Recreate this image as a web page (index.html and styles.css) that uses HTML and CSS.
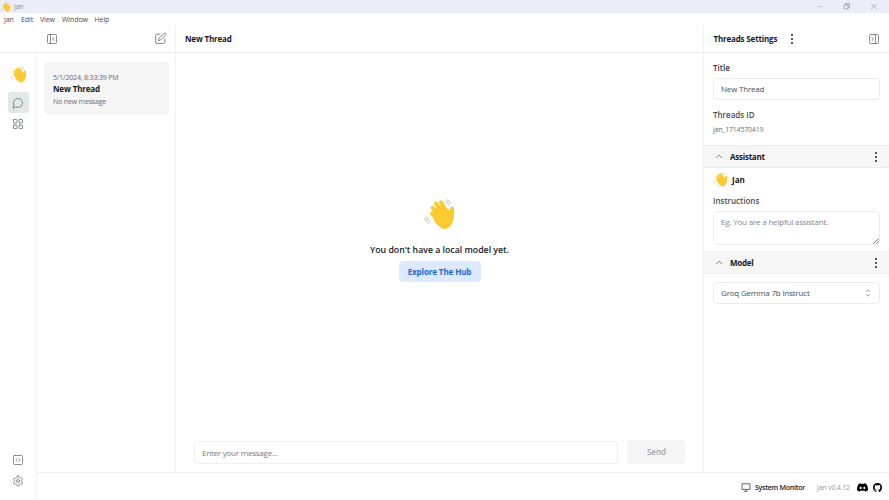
FILE: index.html
```html
<!DOCTYPE html>
<html lang="en">
<head>
<meta charset="utf-8">
<title>Jan</title>
<link rel="stylesheet" href="styles.css">
</head>
<body>
<svg class="defs" aria-hidden="true">
  <symbol id="wave" viewBox="27 24 96 96">
    <g fill="none" stroke="#fbc931" stroke-linecap="round" stroke-width="12">
      <path d="M51 71 78 100M53 53 86 92M63 41 94 84M78 37 103 80" />
      <path d="M112 55Q106 68 108 88" stroke-width="11" />
    </g>
    <path d="M55 70 64 54 82 42 100 60 117.500 58Q119 83 112 99 103 117 86 117 74 115 58 94Z" fill="#fbc931" />
    <path d="M57 59 68 72M68 47 78 60" fill="none" stroke="#edb62b" stroke-width="1.2" />
    <path d="M90 34Q99 36 102 46M95 29Q105 32 108 41M35 81Q38 91 46 94M30 85Q33 96 41 100" fill="none" stroke="#b1b9be" stroke-width="2.5" stroke-linecap="round" />
  </symbol>
  <symbol id="dots" viewBox="0 0 4 12"><circle cx="2" cy="2" r="1"/><circle cx="2" cy="6" r="1"/><circle cx="2" cy="10" r="1"/></symbol>
</svg>
<div class="titlebar">
  <svg class="app-icon"><use href="#wave"/></svg><span class="app-name">Jan</span>
  <svg class="window-controls" viewBox="0 0 62 13"><path class="faint" d="M1 6.500h6"/><path d="M28 4.900h4v4h-4zM29.200 4.900V3.500h4.200v4.200H32M55.300 3.800l5.400 5.400M60.700 3.800l-5.400 5.400"/></svg>
</div>
<nav class="menubar"><span class="m-jan">Jan</span><span class="m-edit">Edit</span><span class="m-view">View</span><span class="m-window">Window</span><span>Help</span></nav>
<header class="topbar">
  <div class="top-left">
    <svg class="icon i12" viewBox="0 0 24 24"><rect x="3" y="3" width="18" height="18" rx="2"/><path d="M9 3v18m7-6-3-3 3-3"/></svg>
    <svg class="icon i13" viewBox="0 0 24 24"><path d="M11 4H5a2 2 0 0 0-2 2v13a2 2 0 0 0 2 2h13a2 2 0 0 0 2-2v-6M18.400 2.600a2.100 2.100 0 0 1 3 3L12 15l-4 1 1-4z"/></svg>
  </div>
  <div class="top-center"><span class="t-thread">New Thread</span></div>
  <div class="top-right"><span class="t-settings">Threads Settings</span><svg class="dots"><use href="#dots"/></svg>
    <svg class="icon i12 push" viewBox="0 0 24 24"><rect x="3" y="3" width="18" height="18" rx="2"/><path d="M15 3v18M8 9l3 3-3 3"/></svg></div>
</header>
<div class="body">
  <aside class="rail">
    <svg class="rail-wave"><use href="#wave"/></svg>
    <div class="rail-item active"><svg class="icon i12" viewBox="0 0 24 24"><path d="M7.900 20A9 9 0 1 0 4 16.100L2 22Z"/></svg></div>
    <div class="rail-item"><svg class="icon i12" viewBox="0 0 24 24"><rect x="3" y="3" width="7" height="7" rx="1"/><rect x="14" y="3" width="7" height="7" rx="1"/><rect x="14" y="14" width="7" height="7" rx="1"/><rect x="3" y="14" width="7" height="7" rx="1"/></svg></div>
    <div class="rail-item bottom"><svg class="icon i12" viewBox="0 0 24 24"><rect x="3" y="3" width="18" height="18" rx="2"/><path d="m10 9.500-2.500 2.500 2.500 2.500M14 9.500l2.500 2.500-2.500 2.500"/></svg></div>
    <div class="rail-item"><svg class="icon i12" viewBox="0 0 24 24"><path d="M12.220 2h-.44a2 2 0 0 0-2 2v.18a2 2 0 0 1-1 1.730l-.43.25a2 2 0 0 1-2 0l-.15-.08a2 2 0 0 0-2.730.73l-.22.38a2 2 0 0 0 .73 2.730l.15.1a2 2 0 0 1 1 1.720v.51a2 2 0 0 1-1 1.740l-.15.09a2 2 0 0 0-.73 2.730l.22.38a2 2 0 0 0 2.730.73l.15-.08a2 2 0 0 1 2 0l.43.25a2 2 0 0 1 1 1.730V20a2 2 0 0 0 2 2h.44a2 2 0 0 0 2-2v-.18a2 2 0 0 1 1-1.730l.43-.25a2 2 0 0 1 2 0l.15.08a2 2 0 0 0 2.730-.73l.22-.39a2 2 0 0 0-.73-2.730l-.15-.08a2 2 0 0 1-1-1.740v-.5a2 2 0 0 1 1-1.740l.15-.09a2 2 0 0 0 .73-2.730l-.22-.38a2 2 0 0 0-2.730-.73l-.15.08a2 2 0 0 1-2 0l-.43-.25a2 2 0 0 1-1-1.730V4a2 2 0 0 0-2-2z"/><circle cx="12" cy="12" r="3"/></svg></div>
  </aside>
  <div class="workspace">
    <div class="panels">
      <section class="threads">
        <article class="thread-card"><span class="date">5/1/2024, 8:33:39 PM</span><strong class="card-title">New Thread</strong><span class="card-note">No new message</span></article>
      </section>
      <main class="chat">
        <div class="empty"><svg class="big-wave"><use href="#wave"/></svg><p class="no-model">You don't have a local model yet.</p><button class="hub"><span>Explore The Hub</span></button></div>
        <div class="composer"><div class="message"><span>Enter your message...</span></div><button class="send"><span>Send</span></button></div>
      </main>
      <aside class="settings">
        <div class="details">
          <div class="label l-title"><span>Title</span></div>
          <div class="field"><span class="v-title">New Thread</span></div>
          <div class="label l-id"><span>Threads ID</span></div>
          <div class="id"><span>jan_1714570419</span></div>
        </div>
        <div class="section-head"><svg class="chev" viewBox="0 0 8 5"><path d="m1 4 3-3 3 3"/></svg><span class="h-assistant">Assistant</span><svg class="dots push"><use href="#dots"/></svg></div>
        <div class="assistant">
          <div class="agent"><svg class="agent-wave"><use href="#wave"/></svg><span>Jan</span></div>
          <div class="label l-inst"><span>Instructions</span></div>
          <div class="area"><span>Eg. You are a helpful assistant.</span><svg class="grip" viewBox="0 0 6 6"><path d="M.5 5.500l5-5M3.500 5.500l2-2"/></svg></div>
        </div>
        <div class="section-head"><svg class="chev" viewBox="0 0 8 5"><path d="m1 4 3-3 3 3"/></svg><span class="h-model">Model</span><svg class="dots push"><use href="#dots"/></svg></div>
        <div class="field select"><span class="v-model">Groq Gemma 7b Instruct</span><svg class="updown" viewBox="0 0 6 8"><path d="m1 2.800 2-2 2 2M1 5.200l2 2 2-2"/></svg></div>
      </aside>
    </div>
    <footer class="status">
      <svg class="monitor" viewBox="0 0 10 9"><path d="M1 .8h8v5.600H1zM5 6.400v1.800M3.200 8.300h3.600"/></svg><span class="sysmon">System Monitor</span><span class="version">Jan v0.4.12</span>
      <svg class="discord" viewBox="0 0 24 24"><path d="M20.300 4.400A19.800 19.800 0 0 0 15.400 2.900l-.6 1.300a18 18 0 0 0-5.600 0l-.6-1.300A20 20 0 0 0 3.700 4.400C.5 9.100-.3 13.700.1 18.200a20 20 0 0 0 6 3l1.300-2-2-1 .5-.4c4 1.800 8.200 1.800 12.200 0l.5.4-2 1 1.300 2a20 20 0 0 0 6-3c.5-5.200-.8-9.700-3.600-13.800zM8 15.300c-1.200 0-2.200-1.100-2.200-2.400s1-2.400 2.200-2.400 2.200 1.100 2.200 2.400S9.200 15.300 8 15.300zm8 0c-1.200 0-2.200-1.100-2.200-2.400s1-2.400 2.200-2.400 2.200 1.100 2.200 2.400-1 2.400-2.200 2.400z"/></svg>
      <svg class="github" viewBox="0 0 24 24"><path d="M12 .3a12 12 0 0 0-3.800 23.380c.6.120.83-.26.83-.57v-2.230c-3.340.73-4.030-1.420-4.030-1.420-.55-1.390-1.330-1.760-1.330-1.760-1.090-.74.080-.73.080-.73 1.200.09 1.840 1.240 1.840 1.240 1.070 1.830 2.810 1.300 3.490 1 .11-.78.42-1.310.76-1.610-2.660-.3-5.460-1.330-5.460-5.930 0-1.310.46-2.380 1.230-3.220-.12-.3-.53-1.520.12-3.180 0 0 1.010-.32 3.300 1.230a11.500 11.500 0 0 1 6 0c2.290-1.550 3.300-1.230 3.300-1.230.65 1.660.24 2.880.12 3.180.77.840 1.230 1.910 1.230 3.220 0 4.610-2.800 5.620-5.480 5.920.43.370.81 1.100.81 2.220v3.290c0 .32.220.69.830.57A12 12 0 0 0 12 .3"/></svg>
    </footer>
  </div>
</div>
</body>
</html>
```

FILE: styles.css
```css
* { box-sizing: border-box; }
body { margin: 0; width: 889px; height: 500px; display: flex; flex-direction: column; overflow: hidden; background: #fff; color: #17191c; font: 8px/12px "Open Sans", "Noto Sans", sans-serif; }
svg { display: block; flex: none; }
span, strong, p { white-space: nowrap; }
button { border: 0; padding: 0; font: inherit; }
.defs { position: absolute; width: 0; height: 0; }
.icon { fill: none; stroke: #6c7075; stroke-width: 1.6; stroke-linecap: round; stroke-linejoin: round; }
.i12 { width: 12px; height: 12px; }
.i13 { width: 13px; height: 13px; }
.push { margin-left: auto; }
.dots { width: 4px; height: 12px; fill: #222; }

.titlebar { height: 13px; flex: none; display: flex; align-items: center; background: #ebeef8; padding-left: 1px; }
.app-icon { width: 10px; height: 10px; }
.app-name { margin-left: 3px; color: #8b8d94; font-size: 7px; line-height: 14px; letter-spacing: -.25px; }
.window-controls { width: 62px; height: 13px; margin-left: auto; margin-right: 11px; fill: none; stroke: #999da3; stroke-width: .8; }
.window-controls .faint { stroke: #c9ccd3; }
.menubar { height: 12px; flex: none; display: flex; padding-left: 4px; font-size: 7px; line-height: 13px; color: #4b4d50; letter-spacing: -.1px; }
.m-jan { width: 17px; } .m-edit { width: 19px; } .m-view { width: 22px; } .m-window { width: 32.5px; }

.topbar { height: 28px; flex: none; display: flex; border-bottom: 1px solid #e9ebf5; font-weight: 700; line-height: 27px; letter-spacing: -.17px; }
.top-left { width: 176px; display: flex; align-items: center; justify-content: space-between; padding: 0 8px 0 46px; border-right: 1px solid #f1f2f6; }
.top-center { width: 528px; padding-left: 9px; border-right: 1px solid #f1f2f6; }
.top-right { flex: 1; display: flex; align-items: center; padding: 0 9px 0 9.5px; }
.top-right .dots:not(.push) { margin-left: 13px; }

.body { flex: 1; min-height: 0; display: flex; }
.rail { width: 37px; display: flex; flex-direction: column; align-items: flex-start; border-right: 1px solid #f1f2f5; padding: 13px 0 9px 8px; }
.rail-wave { width: 17px; height: 17px; margin: 0 0 9px 2px; }
.rail-item { width: 21px; height: 21px; flex: none; display: flex; align-items: center; padding-left: 4px; border-radius: 3px; }
.rail-item.active { background: #e0e9e8; }
.rail-item.bottom { margin-top: auto; }
.workspace { flex: 1; display: flex; flex-direction: column; min-width: 0; }
.panels { flex: 1; display: flex; min-height: 0; }
.threads { width: 139px; padding: 9px 6px 9px 7px; border-right: 1px solid #f1f2f6; }
.thread-card { height: 53px; display: flex; flex-direction: column; align-items: flex-start; border-radius: 4px; background: #f5f5f6; padding: 9px; }
.date, .card-note { font-size: 7px; color: #686b6f; letter-spacing: -.17px; }
.date { line-height: 13px; height: 12px; }
.card-title { letter-spacing: -.13px; }
.card-note { line-height: 13px; }

.chat { width: 528px; display: flex; flex-direction: column; border-right: 1px solid #f0f1f4; }
.empty { flex: 1; display: flex; flex-direction: column; align-items: center; padding-top: 145px; }
.big-wave { width: 32px; height: 32px; }
.no-model { margin: 14px 0 4px; font-size: 8.75px; line-height: 13px; font-weight: 600; }
.hub { width: 82px; height: 21px; border-radius: 4px; background: #dbeafe; color: #2563d9; font-weight: 700; line-height: 21px; letter-spacing: -.1px; }
.composer { display: flex; gap: 9px; padding: 0 17px 8px 18px; align-items: center; }
.message { width: 424px; height: 23px; border: 1px solid #eeeff4; border-radius: 4px; padding-left: 7px; line-height: 22px; color: #777b80; margin-top: 1px; letter-spacing: -.22px; }
.send { width: 59px; height: 24px; border-radius: 4px; background: #f5f5f6; color: #a0a2a6; font-weight: 600; line-height: 24px; }

.settings { flex: 1; }
.details { height: 92px; padding: 9px 9px 0; }
.label { font-weight: 600; color: #4b4e54; line-height: 12px; }
.field { height: 22px; border: 1px solid #e9ebf4; border-radius: 4px; padding: 0 7px; line-height: 20px; color: #4a4d52; letter-spacing: -.19px; }
.l-title { height: 16px; line-height: 12px; color: #303238; }
.l-id { margin-top: 9px; }
.id { font-size: 7px; line-height: 17px; color: #6c6f74; letter-spacing: -.2px; }
.section-head { height: 23px; display: flex; align-items: center; background: #f6f6f7; border-top: 1px solid #edf0f8; border-bottom: 1px solid #e8ebf8; font-weight: 700; line-height: 21px; padding: 0 11px; letter-spacing: -.25px; }
.section-head .chev { margin-right: 7px; }
.chev { width: 8px; height: 5px; fill: none; stroke: #777b80; stroke-width: .8; }
.assistant { height: 83px; padding: 3px 9px 0; }
.agent { height: 17px; display: flex; align-items: center; gap: 4px; font-weight: 700; }
.agent-wave { width: 15px; height: 15px; margin-bottom: 1px; }
.l-inst { margin-top: 7px; height: 16px; }
.area { height: 34px; position: relative; border: 1px solid #e9ebf4; border-radius: 4px; padding: 4px 7px; color: #83868b; letter-spacing: -.19px; }
.grip { position: absolute; right: 0; bottom: 0; width: 6px; height: 6px; stroke: #555; stroke-width: .8; }
.select { margin: 8px 9px 0; display: flex; align-items: center; justify-content: space-between; padding-right: 8px; }
.updown { width: 6px; height: 8px; fill: none; stroke: #777b80; stroke-width: .8; }

.status { height: 28px; border-top: 1px solid #f0f1f3; display: flex; align-items: center; justify-content: flex-end; padding: 1px 7px 0 0; font-size: 7px; line-height: 13px; }
.monitor { width: 10px; height: 9px; fill: none; stroke: #555; stroke-width: .9; margin-right: 4px; }
.sysmon { width: 62px; font-weight: 600; letter-spacing: -.25px; }
.version { width: 40px; color: #95989c; letter-spacing: -.2px; }
.discord { width: 11px; height: 11px; }
.github { width: 9px; height: 9px; margin-left: 5px; }
```
